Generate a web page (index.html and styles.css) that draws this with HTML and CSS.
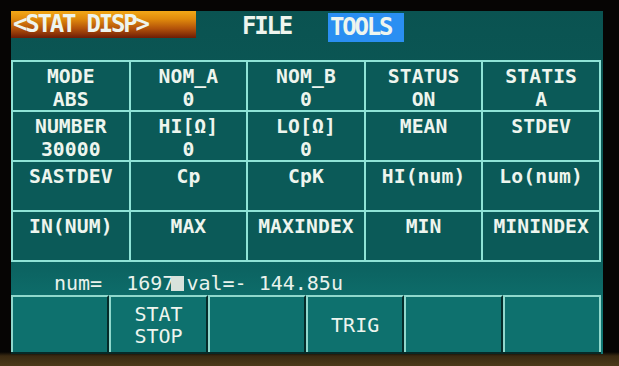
FILE: index.html
```html
<!DOCTYPE html>
<html>
<head>
<meta charset="utf-8">
<link rel="stylesheet" href="styles.css">
</head>
<body>
<div class="device">
  <div class="screen">
    <div class="menubar">
      <div class="tab">&lt;STAT DISP&gt;</div>
      <div class="menu file">FILE</div>
      <div class="menu tools">TOOLS</div>
    </div>
    <div class="grid">
      <div class="cell"><span>MODE</span><span>ABS</span></div>
      <div class="cell"><span>NOM_A</span><span>0</span></div>
      <div class="cell"><span>NOM_B</span><span>0</span></div>
      <div class="cell"><span>STATUS</span><span>ON</span></div>
      <div class="cell"><span>STATIS</span><span>A</span></div>
      <div class="cell"><span>NUMBER</span><span>30000</span></div>
      <div class="cell"><span>HI[Ω]</span><span>0</span></div>
      <div class="cell"><span>LO[Ω]</span><span>0</span></div>
      <div class="cell"><span>MEAN</span></div>
      <div class="cell"><span>STDEV</span></div>
      <div class="cell"><span>SASTDEV</span></div>
      <div class="cell"><span>Cp</span></div>
      <div class="cell"><span>CpK</span></div>
      <div class="cell"><span>HI(num)</span></div>
      <div class="cell"><span>Lo(num)</span></div>
      <div class="cell"><span>IN(NUM)</span></div>
      <div class="cell"><span>MAX</span></div>
      <div class="cell"><span>MAXINDEX</span></div>
      <div class="cell"><span>MIN</span></div>
      <div class="cell"><span>MININDEX</span></div>
    </div>
    <div class="readout">num=  1697<span class="cursor"></span>val=- 144.85u</div>
    <div class="softkeys">
      <div class="key"></div>
      <div class="key"><span>STAT</span><span>STOP</span></div>
      <div class="key"></div>
      <div class="key"><span>TRIG</span></div>
      <div class="key"></div>
      <div class="key last"></div>
    </div>
  </div>
</div>
</body>
</html>
```
FILE: styles.css
```css
html, body {
  margin: 0;
  padding: 0;
  background: #050403;
}
.device {
  width: 619px;
  height: 366px;
  overflow: hidden;
  background: linear-gradient(to bottom, #060504 0, #060504 352px, #3a2a12 356px, #4b3a1a 366px);
  font-family: "DejaVu Sans Mono", "Liberation Mono", monospace;
  color: #eef5ee;
}
.screen {
  margin: 11px 0 0 11px;
  width: 592px;
  height: 343px;
  background: linear-gradient(to bottom, #0a5351 0, #0b5a58 150px, #0c6462 260px, #0e716e 300px, #0f7774 343px);
  display: flex;
  flex-direction: column;
}
.menubar {
  height: 31px;
  display: flex;
  align-items: flex-start;
  font-weight: bold;
  font-size: 24px;
  letter-spacing: -2.2px;
}
.tab {
  width: 183px;
  height: 27px;
  line-height: 27px;
  padding-left: 2px;
  background: linear-gradient(to bottom, #f2a818 0, #e08a0c 30%, #b3520a 65%, #6e1c06 100%);
  white-space: pre;
}
.menu {
  height: 29px;
  line-height: 29px;
  margin-top: 1px;
}
.file {
  margin-left: 46px;
}
.tools {
  margin-left: 37px;
  margin-top: 2px;
  width: 74px;
  padding-left: 2px;
  background: #2a8ff2;
}
.grid {
  margin-top: 18px;
  width: 586px;
  display: grid;
  grid-template-columns: repeat(5, 1fr);
  grid-template-rows: repeat(4, 48px);
  gap: 2px;
  border: 2px solid #8fe3d6;
  background: #8fe3d6;
}
.cell {
  background: #0b5a58;
  display: flex;
  flex-direction: column;
  align-items: center;
  padding-top: 3px;
  font-weight: bold;
  font-size: 19.7px;
  line-height: 23px;
  letter-spacing: 0.1px;
}
.readout {
  margin-top: 10px;
  padding-left: 43px;
  height: 22px;
  font-size: 20px;
  line-height: 22px;
  white-space: pre;
  color: #e9f2ec;
}
.cursor {
  display: inline-block;
  width: 13px;
  height: 15px;
  margin-left: -3px;
  margin-right: 2px;
  background: #d8e2dc;
  vertical-align: -1px;
}
.softkeys {
  margin-top: 1px;
  width: 590px;
  height: 57px;
  display: grid;
  grid-template-columns: repeat(6, 1fr);
  border-bottom: 2px solid #062a28;
}
.key {
  border-top: 2px solid #8fd8cc;
  border-left: 2px solid #8fd8cc;
  border-right: 2px solid #052b29;
  background: #0e716e;
  display: flex;
  flex-direction: column;
  align-items: center;
  justify-content: center;
  font-size: 20px;
  line-height: 22px;
  color: #eef5ee;
}
.key.last {
  border-right-color: #8fd8cc;
}
```
